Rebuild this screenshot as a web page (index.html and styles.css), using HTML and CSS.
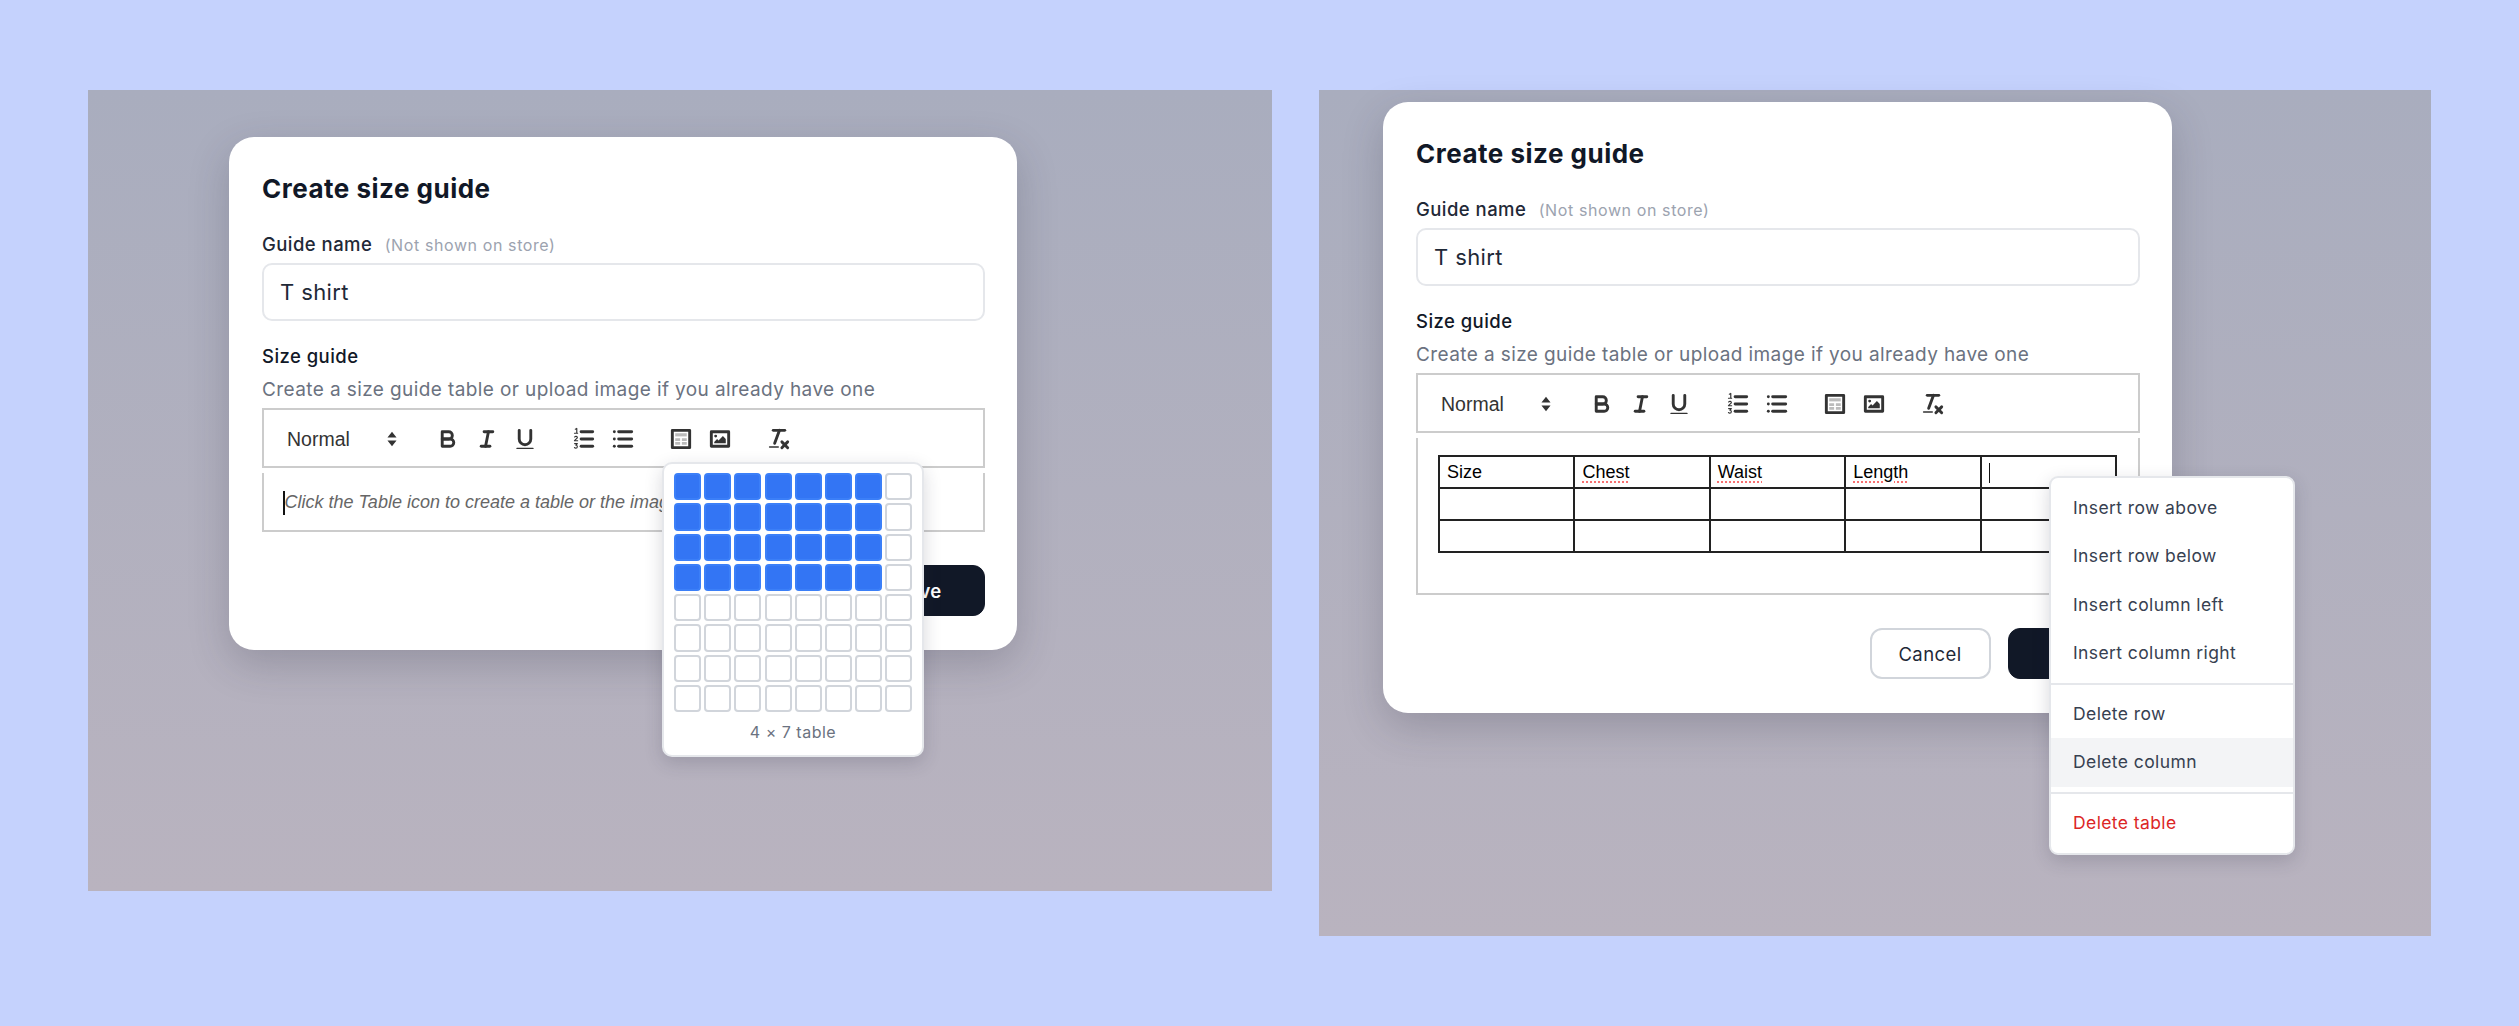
FILE: index.html
```html
<!DOCTYPE html>
<html lang="en">
<head>
<meta charset="utf-8">
<title>Create size guide</title>
<link rel="stylesheet" href="styles.css">
</head>
<body>
<svg class="defs" aria-hidden="true">
  <symbol id="i-bold" viewBox="0 0 18 18"><path class="s" d="M5,4H9.5A2.5,2.5,0,0,1,12,6.5v0A2.5,2.5,0,0,1,9.5,9H5V4Z"/><path class="s" d="M5,9h5.5A2.5,2.5,0,0,1,13,11.5v0A2.5,2.5,0,0,1,10.5,14H5V9Z"/></symbol>
  <symbol id="i-italic" viewBox="0 0 18 18"><line class="s" x1="7" x2="13" y1="4" y2="4"/><line class="s" x1="5" x2="11" y1="14" y2="14"/><line class="s" x1="8" x2="10" y1="14" y2="4"/></symbol>
  <symbol id="i-underline" viewBox="0 0 18 18"><path class="s" d="M5,3V9a4,4,0,0,0,4,4H9a4,4,0,0,0,4-4V3"/><rect class="f" height="1" rx=".5" width="12" x="3" y="15"/></symbol>
  <symbol id="i-ol" viewBox="0 0 18 18"><line class="s" x1="7" x2="15" y1="4" y2="4"/><line class="s" x1="7" x2="15" y1="9" y2="9"/><line class="s" x1="7" x2="15" y1="14" y2="14"/><path class="t" d="M3 2.2l1-.5v3.2M2.4 5h2.2M2.5 7.6c.6-.8 2-.5 1.9.4 0 .7-1.5 1.3-2 2.2h2.2M2.5 12.2h1.9l-1 1.1c1.3 0 1.3 2-.1 2-.4 0-.7-.1-.9-.4"/></symbol>
  <symbol id="i-ul" viewBox="0 0 18 18"><line class="s" x1="6" x2="15" y1="4" y2="4"/><line class="s" x1="6" x2="15" y1="9" y2="9"/><line class="s" x1="6" x2="15" y1="14" y2="14"/><line class="s" x1="3" x2="3" y1="4" y2="4"/><line class="s" x1="3" x2="3" y1="9" y2="9"/><line class="s" x1="3" x2="3" y1="14" y2="14"/></symbol>
  <symbol id="i-table" viewBox="0 0 18 18"><rect class="s" height="12" width="12" x="3" y="3"/><rect class="l" height="2.2" width="8" x="5" y="5"/><path class="l" d="M5 8.4h3.4v2H5zM9.6 8.4H13v2H9.6zM5 11h3.4v2H5zM9.6 11H13v2H9.6z"/></symbol>
  <symbol id="i-image" viewBox="0 0 18 18"><rect class="s" height="10" width="12" x="3" y="4"/><circle class="f" cx="6" cy="7" r="1"/><polyline class="f" points="5 12 5 11 7 9 8 10 11 7 13 9 13 12 5 12"/></symbol>
  <symbol id="i-clean" viewBox="0 0 18 18"><line class="s" x1="5" x2="13" y1="3" y2="3"/><line class="s" x1="6" x2="9.35" y1="12" y2="3"/><line class="s" x1="11" x2="15" y1="11" y2="15"/><line class="s" x1="15" x2="11" y1="11" y2="15"/><rect class="f" height="1" rx=".5" width="7" x="2" y="14"/></symbol>
  <symbol id="i-updown" viewBox="0 0 10 18"><path class="f" d="M5 3.6 8.4 7.8H1.6ZM5 14.4 1.6 10.2H8.4Z"/></symbol>
</svg>

<main class="stage">
  <section class="panel panel-a">
    <div class="modal">
      <h1 class="title">Create size guide</h1>
      <label class="label">Guide name <span class="hint">(Not shown on store)</span></label>
      <div class="input">T shirt</div>
      <div class="label label-size">Size guide</div>
      <p class="help">Create a size guide table or upload image if you already have one</p>
      <div class="toolbar">
        <div class="picker"><span>Normal</span><svg class="updown"><use href="#i-updown"/></svg></div>
        <div class="group"><span class="btn"><svg><use href="#i-bold"/></svg></span><span class="btn"><svg><use href="#i-italic"/></svg></span><span class="btn"><svg><use href="#i-underline"/></svg></span></div>
        <div class="group"><span class="btn"><svg><use href="#i-ol"/></svg></span><span class="btn"><svg><use href="#i-ul"/></svg></span></div>
        <div class="group"><span class="btn"><svg><use href="#i-table"/></svg></span><span class="btn"><svg><use href="#i-image"/></svg></span></div>
        <div class="group"><span class="btn"><svg><use href="#i-clean"/></svg></span></div>
      </div>
      <div class="editor editor-empty"><span class="caret"></span><em class="placeholder">Click the Table icon to create a table or the image icon to upload an image</em></div>
      <div class="actions">
        <button class="button button-primary">Save</button>
      </div>
      <div class="grid-popup">
        <div class="cells">
          <i class="on"></i><i class="on"></i><i class="on"></i><i class="on"></i><i class="on"></i><i class="on"></i><i class="on"></i><i></i>
          <i class="on"></i><i class="on"></i><i class="on"></i><i class="on"></i><i class="on"></i><i class="on"></i><i class="on"></i><i></i>
          <i class="on"></i><i class="on"></i><i class="on"></i><i class="on"></i><i class="on"></i><i class="on"></i><i class="on"></i><i></i>
          <i class="on"></i><i class="on"></i><i class="on"></i><i class="on"></i><i class="on"></i><i class="on"></i><i class="on"></i><i></i>
          <i></i><i></i><i></i><i></i><i></i><i></i><i></i><i></i>
          <i></i><i></i><i></i><i></i><i></i><i></i><i></i><i></i>
          <i></i><i></i><i></i><i></i><i></i><i></i><i></i><i></i>
          <i></i><i></i><i></i><i></i><i></i><i></i><i></i><i></i>
        </div>
        <div class="grid-caption">4 × 7 table</div>
      </div>
    </div>
  </section>

  <section class="panel panel-b">
    <div class="modal">
      <h1 class="title">Create size guide</h1>
      <label class="label">Guide name <span class="hint">(Not shown on store)</span></label>
      <div class="input">T shirt</div>
      <div class="label label-size">Size guide</div>
      <p class="help">Create a size guide table or upload image if you already have one</p>
      <div class="toolbar">
        <div class="picker"><span>Normal</span><svg class="updown"><use href="#i-updown"/></svg></div>
        <div class="group"><span class="btn"><svg><use href="#i-bold"/></svg></span><span class="btn"><svg><use href="#i-italic"/></svg></span><span class="btn"><svg><use href="#i-underline"/></svg></span></div>
        <div class="group"><span class="btn"><svg><use href="#i-ol"/></svg></span><span class="btn"><svg><use href="#i-ul"/></svg></span></div>
        <div class="group"><span class="btn"><svg><use href="#i-table"/></svg></span><span class="btn"><svg><use href="#i-image"/></svg></span></div>
        <div class="group"><span class="btn"><svg><use href="#i-clean"/></svg></span></div>
      </div>
      <div class="editor editor-table">
        <table class="sheet">
          <tr><td>Size</td><td><u>Chest</u></td><td><u>Waist</u></td><td><u>Length</u></td><td><span class="caret caret-cell"></span></td></tr>
          <tr><td></td><td></td><td></td><td></td><td></td></tr>
          <tr><td></td><td></td><td></td><td></td><td></td></tr>
        </table>
      </div>
      <div class="actions">
        <button class="button button-ghost">Cancel</button>
        <button class="button button-primary">Save</button>
      </div>
      <ul class="menu">
        <li>Insert row above</li>
        <li>Insert row below</li>
        <li>Insert column left</li>
        <li>Insert column right</li>
        <li class="sep"></li>
        <li>Delete row</li>
        <li class="active">Delete column</li>
        <li class="sep"></li>
        <li class="danger">Delete table</li>
      </ul>
    </div>
  </section>
</main>
</body>
</html>
```
FILE: styles.css
```css
* { box-sizing: border-box; }
html, body { margin: 0; height: 100%; overflow: hidden; }
body { background: #c5d2fd; font-family: "Inter", "Noto Sans", sans-serif; color: #111827; }
.defs { position: absolute; width: 0; height: 0; }
.s { fill: none; stroke: #333; stroke-width: 2; stroke-linecap: round; stroke-linejoin: round; }
.f { fill: #333; stroke: none; }
.l { fill: #bbb; stroke: none; }
.t { fill: none; stroke: #333; stroke-width: .8; stroke-linecap: round; stroke-linejoin: round; }

.stage { display: flex; align-items: flex-start; gap: 47px; padding: 90px 0 0 88px; }
.panel { flex: none; background: linear-gradient(180deg, #a9adbe 0%, #b9b3bf 100%); }
.panel-a { width: 1184px; height: 801px; padding: 47px 0 0 141px; }
.panel-b { width: 1112px; height: 846px; padding: 12px 0 0 64px; }

.modal { position: relative; width: 788px; padding: 32px 32px 34px 33px; background: #fff; border-radius: 25px; box-shadow: 0 14px 40px rgba(40, 40, 60, .22); }
.panel-b .modal { width: 789px; }

.title { margin: 0; height: 40px; line-height: 40px; font-size: 26px; font-weight: 700; letter-spacing: .5px; color: #111827; }
.label { display: block; margin-top: 24px; height: 22px; line-height: 22px; font-size: 18.5px; font-weight: 500; letter-spacing: .45px; color: #1f2937; }
.hint { margin-left: 7px; font-size: 16px; font-weight: 400; letter-spacing: .6px; color: #9ca3af; }
.input { margin-top: 8px; height: 58px; padding: 0 16px; line-height: 54px; font-size: 22px; letter-spacing: .4px; color: #1f2937; border: 2px solid #e5e7eb; border-radius: 10px; }
.label-size { margin-top: 24px; color: #111827; }
.help { margin: 11px 0 0; height: 24px; line-height: 24px; font-size: 19px; letter-spacing: .4px; color: #6b7280; }

.toolbar { display: flex; align-items: center; margin-top: 6px; height: 60px; border: 2px solid #ccc; padding: 2px 0 0 23px; }
.picker { display: flex; align-items: center; width: 141.5px; font-family: "Liberation Sans", sans-serif; font-size: 19.5px; color: #333; }
.picker span { width: 98px; }
.updown { width: 14px; height: 24px; }
.group { display: flex; margin-right: 20px; }
.btn { display: flex; align-items: center; justify-content: center; width: 38.7px; height: 30px; }
.btn svg { width: 26px; height: 26px; }

.editor { margin-top: 5px; border: 2px solid #ccc; border-top: 0; font-family: "Liberation Sans", sans-serif; background: #fff; }
.editor-empty { height: 59px; padding: 2px 0 0 19px; display: flex; align-items: center; white-space: nowrap; font-size: 18px; color: #666; }
.caret { display: inline-block; width: 1.5px; height: 24px; background: #111; }
.placeholder { overflow: hidden; }
.editor-table { height: 157px; padding: 17px 20px 0; font-size: 18px; color: #000; }

.sheet { width: 679px; table-layout: fixed; border-collapse: collapse; }
.sheet td { height: 32px; padding: 0 7px; border: 2px solid #222; line-height: 24px; vertical-align: middle; }
.sheet u { text-decoration: underline dotted #f87171 1.5px; text-underline-offset: 3px; }
.caret-cell { height: 20px; vertical-align: middle; }

.actions { display: flex; justify-content: flex-end; gap: 17.5px; margin-top: 33px; }
.button { width: 132px; height: 51px; padding: 0; border-radius: 12px; font-family: inherit; font-size: 18.5px; font-weight: 600; letter-spacing: .4px; }
.button-primary { background: #111827; color: #fff; border: 1px solid #111827; }
.button-ghost { width: 121px; background: #fff; color: #1f2937; font-weight: 400; border: 2px solid #d1d5db; }

.grid-popup { position: absolute; left: 433px; top: 325px; width: 262px; height: 295px; padding: 9px 10px 10px; background: #fff; border: 2px solid #e5e7eb; border-radius: 10px; box-shadow: 0 6px 18px rgba(40, 40, 60, .18); }
.cells { display: grid; grid-template-columns: repeat(8, 27px); grid-auto-rows: 27.3px; gap: 3px 3.2px; }
.cells i { display: block; background: #fff; border: 2px solid #d1d5db; border-radius: 4px; }
.cells i.on { background: #3375f4; border-color: #3b7ff8; }
.grid-caption { margin-top: 8px; text-align: center; font-size: 16px; letter-spacing: .5px; line-height: 24px; color: #6b7280; }

.menu { position: absolute; left: 666px; top: 374px; width: 246px; margin: 0; padding: 5.5px 0 5px; list-style: none; background: #fff; border: 2px solid #e5e7eb; border-radius: 9px; box-shadow: 0 6px 18px rgba(40, 40, 60, .18); }
.menu li { height: 48.6px; padding: 0 22px; line-height: 48.6px; font-size: 17.5px; letter-spacing: .4px; color: #374151; }
.menu li.sep { height: 2px; margin: 5px 0; padding: 0; background: #e5e7eb; }
.menu li.active { background: #f3f4f6; }
.menu li.danger { color: #dc2626; }
```
